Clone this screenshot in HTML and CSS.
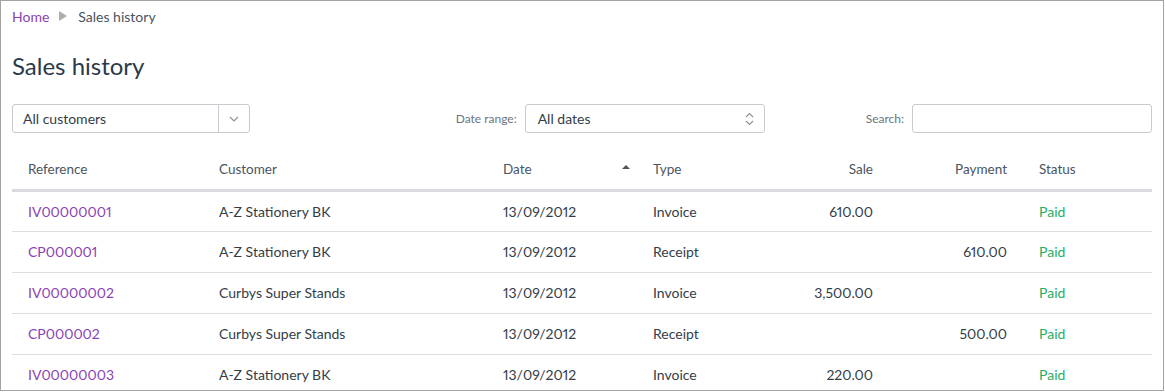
FILE: index.html
```html
<!DOCTYPE html>
<html>
<head>
<meta charset="utf-8">
<link rel="stylesheet" href="styles.css">
</head>
<body>
<div class="frame">
  <nav class="crumbs">
    <a class="crumb-link" href="#">Home</a>
    <span class="crumb-sep"></span>
    <span class="crumb-current">Sales history</span>
  </nav>
  <h1 class="title">Sales history</h1>
  <div class="filters">
    <div class="combo">
      <span class="combo-value">All customers</span>
      <span class="combo-btn">
        <svg width="10" height="6" viewBox="0 0 10 6"><path d="M1 1 L5 5 L9 1" fill="none" stroke="#8a9099" stroke-width="1.1"/></svg>
      </span>
    </div>
    <div class="field field-date">
      <span class="label">Date range:</span>
      <div class="select">
        <span class="select-value">All dates</span>
        <svg class="updown" width="9" height="14" viewBox="0 0 9 14"><path d="M1 5 L4.5 1.5 L8 5 M1 9 L4.5 12.5 L8 9" fill="none" stroke="#8a9099" stroke-width="1.1"/></svg>
      </div>
    </div>
    <div class="field field-search">
      <span class="label">Search:</span>
      <div class="input"></div>
    </div>
  </div>
  <table class="grid">
    <thead>
      <tr>
        <th class="c-ref">Reference</th>
        <th class="c-cust">Customer</th>
        <th class="c-date"><span class="sort">Date<span class="sort-arrow"></span></span></th>
        <th class="c-type">Type</th>
        <th class="c-sale num">Sale</th>
        <th class="c-pay num">Payment</th>
        <th class="c-status">Status</th>
      </tr>
    </thead>
    <tbody>
      <tr><td><a href="#" class="ref">IV00000001</a></td><td>A-Z Stationery BK</td><td>13/09/2012</td><td>Invoice</td><td class="num">610.00</td><td class="num"></td><td class="paid">Paid</td></tr>
      <tr><td><a href="#" class="ref">CP000001</a></td><td>A-Z Stationery BK</td><td>13/09/2012</td><td>Receipt</td><td class="num"></td><td class="num">610.00</td><td class="paid">Paid</td></tr>
      <tr><td><a href="#" class="ref">IV00000002</a></td><td>Curbys Super Stands</td><td>13/09/2012</td><td>Invoice</td><td class="num">3,500.00</td><td class="num"></td><td class="paid">Paid</td></tr>
      <tr><td><a href="#" class="ref">CP000002</a></td><td>Curbys Super Stands</td><td>13/09/2012</td><td>Receipt</td><td class="num"></td><td class="num">500.00</td><td class="paid">Paid</td></tr>
      <tr><td><a href="#" class="ref">IV00000003</a></td><td>A-Z Stationery BK</td><td>13/09/2012</td><td>Invoice</td><td class="num">220.00</td><td class="num"></td><td class="paid">Paid</td></tr>
    </tbody>
  </table>
</div>
</body>
</html>
```
FILE: styles.css
```css
* { box-sizing: border-box; }
html, body { margin: 0; padding: 0; background: #fff; }
body {
  font-family: Lato, "Open Sans", "Liberation Sans", sans-serif;
  color: #333d47;
  overflow: hidden;
  font-variant-numeric: proportional-nums;
}
.frame {
  width: 1164px;
  height: 391px;
  border: 1px solid #a3a3a3;
  padding: 0 11px 0 11px;
  overflow: hidden;
}
.crumbs { display: flex; align-items: center; height: 30px; font-size: 14px; }
.crumb-link { color: #8a3fb5; text-decoration: none; }
.crumb-sep {
  width: 0; height: 0;
  border-top: 5px solid transparent;
  border-bottom: 5px solid transparent;
  border-left: 8px solid #aeaeae;
  margin: 0 11px 0 10px;
}
.crumb-current { color: #4a5560; }
.title { font-size: 24px; font-weight: 400; color: #2b3a4a; margin: 20px 0 0; line-height: 30px; height: 30px; }
.filters { display: flex; align-items: center; margin-top: 23px; height: 29px; }
.combo {
  width: 238px; height: 29px;
  border: 1px solid #c8ccd0; border-radius: 3px;
  display: flex; align-items: center;
}
.combo-value { flex: 1; padding-left: 10px; font-size: 14px; color: #333d47; }
.combo-btn { width: 31px; height: 100%; border-left: 1px solid #c8ccd0; display: flex; align-items: center; justify-content: center; }
.field { display: flex; align-items: center; }
.field-date { margin-left: auto; }
.field-search { margin-left: 101px; }
.label { font-size: 12px; color: #6b7580; margin-right: 8px; }
.select {
  width: 240px; height: 29px;
  border: 1px solid #c8ccd0; border-radius: 3px;
  display: flex; align-items: center; justify-content: space-between;
  padding: 0 10px 0 12px;
}
.select-value { font-size: 14px; color: #333d47; }
.input { width: 240px; height: 29px; border: 1px solid #c8ccd0; border-radius: 3px; }
.grid { width: 1140px; border-collapse: collapse; margin-top: 17px; font-size: 14px; table-layout: fixed; }
.grid th {
  height: 40px; font-weight: 400; color: #4a5560; text-align: left; font-size: 13.5px;
  padding: 0 16px; border-bottom: 3px solid #d9dbde;
}
.grid td { height: 41px; padding: 0 16px; border-bottom: 1px solid #dcdee0; color: #333d47; }
.grid tbody tr:last-child td { border-bottom: none; }
.grid .num { text-align: right; }
.c-ref { width: 191px; }
.c-cust { width: 284px; }
.c-date { width: 150px; }
.c-type { width: 120px; }
.c-sale { width: 132px; }
.c-pay { width: 134px; }
.c-status { width: 129px; }
.sort { display: flex; align-items: center; justify-content: space-between; }
.sort-arrow {
  width: 0; height: 0; margin-right: -9px;
  border-left: 4px solid transparent; border-right: 4px solid transparent;
  border-bottom: 4px solid #4a5560;
  margin-top: -4px;
}
.ref { color: #8a3fb5; text-decoration: none; }
.grid .paid { color: #1fae65; }
```
